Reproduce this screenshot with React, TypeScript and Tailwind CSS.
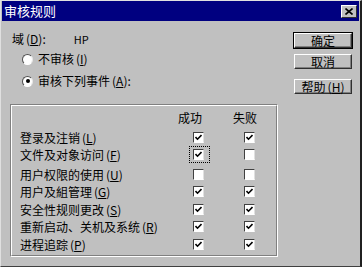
import type { FC, ReactNode } from "react";

const rows = [
	{ label: "登录及注销", key: "L", ok: true, fail: true, mt: "mt-[7px]" },
	{ label: "文件及对象访问", key: "F", ok: true, fail: false, mt: "mt-[6px]", focus: true },
	{ label: "用户权限的使用", key: "U", ok: false, fail: false, mt: "mt-[9px]" },
	{ label: "用户及組管理", key: "G", ok: true, fail: true, mt: "mt-[6px]" },
	{ label: "安全性规则更改", key: "S", ok: true, fail: true, mt: "mt-[7px]" },
	{ label: "重新启动、关机及系统", key: "R", ok: true, fail: true, mt: "mt-[6px]" },
	{ label: "进程追踪", key: "P", ok: true, fail: true, mt: "mt-[7px]" },
];

const Key: FC<{ k: string }> = ({ k }) => (
	<span className="ml-[2px]">
		(<u>{k}</u>)
	</span>
);

const CheckBox: FC<{ checked: boolean; focus?: boolean }> = ({ checked, focus }) => (
	<span className="relative inline-flex">
		<span className="flex h-[11px] w-[11px] items-center justify-center border border-b-white border-l-[#404040] border-r-[#e0e0e0] border-t-[#404040] bg-white">
			{checked && (
				<svg width="7" height="7" viewBox="0 0 7 7">
					<path d="M0.5 3 L2.5 5.2 L6.5 1" fill="none" stroke="#000" strokeWidth="1.6" />
				</svg>
			)}
		</span>
		{focus && (
			<span className="absolute -bottom-[3px] -left-[4px] -right-[6px] -top-[3px] border border-dotted border-black" />
		)}
	</span>
);

const Radio: FC<{ on?: boolean; children: ReactNode }> = ({ on, children }) => (
	<div className="flex h-[14px] items-center pl-[12px]">
		<span className="flex h-[11px] w-[11px] items-center justify-center rounded-full border border-b-white border-l-[#505050] border-r-[#e8e8e8] border-t-[#505050] bg-white">
			{on && <span className="h-[4px] w-[4px] rounded-full bg-black" />}
		</span>
		<span className="ml-[5px]">{children}</span>
	</div>
);

const Button: FC<{ def?: boolean; children: ReactNode; className?: string }> = ({ def, children, className }) => (
	<div className={`h-[17px] w-[60px] border ${def ? "border-black" : "border-transparent"} ${className ?? ""}`}>
		<div className="flex h-full items-center justify-center border border-b-[#303030] border-l-white border-r-[#303030] border-t-white shadow-[inset_-1px_-1px_0_#808080] leading-none">
			{children}
		</div>
	</div>
);

const App: FC = () => {
	return (
		<div
			className="relative h-[267px] w-[362px] overflow-hidden border-b border-l border-r-2 border-t border-b-[#404040] border-l-[#e0e0e0] border-r-[#202020] border-t-[#e0e0e0] bg-[#c0c0c0] text-[12px] leading-[14px] text-black"
			style={{ fontFamily: '"Noto Sans CJK SC", "Noto Sans", sans-serif' }}
		>
			<div className="mx-[1px] flex h-[20px] items-center justify-between bg-[#000080] pl-[2px] pr-[2px]">
				<span className="text-[13px] text-white">审核规则</span>
				<span className="flex h-[13px] w-[16px] items-center justify-center border border-b-[#303030] border-l-white border-r-[#303030] border-t-white bg-[#c0c0c0]">
					<svg width="8" height="7" viewBox="0 0 8 7">
						<path d="M0.5 0.5 L7.5 6.5 M7.5 0.5 L0.5 6.5" stroke="#000" strokeWidth="1.6" />
					</svg>
				</span>
			</div>

			<div className="flex">
				<div className="w-[292px] pl-[9px]">
					<div className="mt-[11px] flex h-[14px] items-center pl-[2px]">
						<span>
							域<Key k="D" />:
						</span>
						<span className="ml-[28px] text-[11px]">HP</span>
					</div>
					<div className="mt-[6px]">
						<Radio>
							不审核<Key k="I" />
						</Radio>
					</div>
					<div className="mt-[8px]">
						<Radio on>
							审核下列事件<Key k="A" />:
						</Radio>
					</div>

					<div className="mt-[16px] h-[153px] w-[268px] border border-b-white border-l-[#808080] border-r-white border-t-[#808080]">
						<div className="h-full border border-b-[#808080] border-l-white border-r-[#808080] border-t-white pl-[8px] pt-[5px]">
							<div className="flex h-[14px] items-center">
								<span className="ml-[158px]">成功</span>
								<span className="ml-[31px]">失败</span>
							</div>
							{rows.map((r) => (
								<div key={r.key} className={`flex h-[11px] items-center leading-[11px] ${r.mt}`}>
									<span className="w-[173px] whitespace-nowrap">
										{r.label}
										<Key k={r.key} />
									</span>
									<CheckBox checked={r.ok} focus={r.focus} />
									<span className="ml-[40px] inline-flex">
										<CheckBox checked={r.fail} />
									</span>
								</div>
							))}
						</div>
					</div>
				</div>

				<div className="flex flex-col pt-[11px]">
					<Button def>确定</Button>
					<Button className="mt-[4px]">取消</Button>
					<Button className="mt-[8px]">
						帮助<Key k="H" />
					</Button>
				</div>
			</div>
		</div>
	);
};

export default App;
